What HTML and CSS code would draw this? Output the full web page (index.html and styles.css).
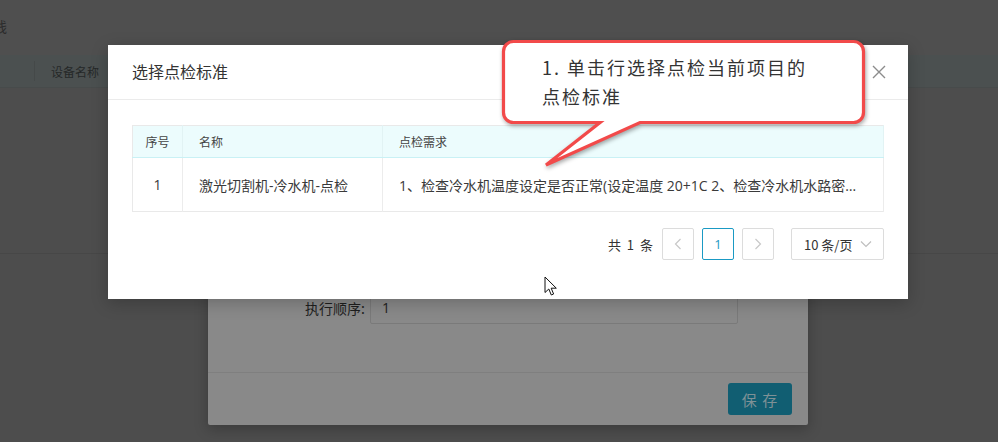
FILE: index.html
```html
<!DOCTYPE html>
<html lang="zh-CN">
<head>
<meta charset="utf-8">
<title>选择点检标准</title>
<link rel="stylesheet" href="styles.css">
</head>
<body>
<div class="page">
  <div class="page-top"><span class="page-title">线</span></div>
  <div class="page-bar">
    <div class="bar-cell bar-first"></div>
    <div class="bar-cell">设备名称</div>
  </div>
  <div class="page-rows"></div>
</div>

<div class="under-modal">
  <div class="under-body">
    <div class="form-row">
      <label class="form-label">执行顺序:</label>
      <div class="form-input">1</div>
    </div>
  </div>
  <div class="under-footer">
    <button class="btn-save">保 存</button>
  </div>
</div>

<div class="modal">
  <div class="modal-header">
    <span class="modal-title">选择点检标准</span>
    <svg class="modal-close" width="14" height="14" viewBox="0 0 14 14"><path d="M1 1L13 13M13 1L1 13" stroke="#8c8c8c" stroke-width="1.4" fill="none"/></svg>
  </div>
  <div class="modal-body">
    <table class="std-table">
      <thead>
        <tr><th class="col-no">序号</th><th class="col-name">名称</th><th class="col-req">点检需求</th></tr>
      </thead>
      <tbody>
        <tr><td class="col-no">1</td><td class="col-name">激光切割机-冷水机-点检</td><td class="col-req"><div class="ellipsis">1、检查冷水机温度设定是否正常(设定温度 20+1C 2、检查冷水机水路密封是否良好，有无漏水现象</div></td></tr>
      </tbody>
    </table>
    <div class="pager">
      <span class="pager-total">共 1 条</span>
      <span class="pager-btn pager-arrow"><svg width="8" height="12" viewBox="0 0 8 12"><path d="M6.5 1L1.5 6L6.5 11" stroke="#c8c8c8" stroke-width="1.2" fill="none"/></svg></span>
      <span class="pager-btn pager-active">1</span>
      <span class="pager-btn pager-arrow"><svg width="8" height="12" viewBox="0 0 8 12"><path d="M1.5 1L6.5 6L1.5 11" stroke="#c8c8c8" stroke-width="1.2" fill="none"/></svg></span>
      <span class="pager-size">10 条/页<svg width="12" height="8" viewBox="0 0 12 8"><path d="M1 1.5L6 6.5L11 1.5" stroke="#bfbfbf" stroke-width="1.2" fill="none"/></svg></span>
    </div>
  </div>
</div>

<div class="callout">
  <svg class="callout-shape" width="380" height="140" viewBox="496 34 380 140">
    <path d="M513.5 41.5H853.5A10 10 0 0 1 863.5 51.5V112.5A10 10 0 0 1 853.5 122.5H640L546 165L600 122.5H513.5A10 10 0 0 1 503.5 112.5V51.5A10 10 0 0 1 513.5 41.5Z" fill="#ffffff" stroke="#f24a4a" stroke-width="3.2" stroke-linejoin="miter"/>
  </svg>
  <div class="callout-text">1. 单击行选择点检当前项目的<br>点检标准</div>
</div>

<svg class="cursor" width="14" height="21" viewBox="0 0 14 21"><path d="M1 1V16.5L4.8 13L7.3 19L9.6 18L7.2 12.2H12.3Z" fill="#ffffff" stroke="#111" stroke-width="1" stroke-linejoin="round"/></svg>
</body>
</html>
```

FILE: styles.css
```css
* { box-sizing: border-box; }
html, body { margin: 0; padding: 0; }
body {
  width: 998px;
  height: 442px;
  overflow: hidden;
  background: #4d4d4d;
  font-family: "Open Sans", "Noto Sans CJK SC", sans-serif;
  color: #333;
}
.page { display: flex; flex-direction: column; }
.page-top {
  height: 55px;
  background: #4f4f4f;
  display: flex;
  align-items: center;
}
.page-title {
  font-family: "Noto Sans CJK SC", sans-serif;
  font-size: 14px;
  color: #2c2c2c;
  margin-left: -7px;
  margin-top: -4px;
}
.page-bar {
  height: 33px;
  background: #4b5050;
  border-bottom: 1px solid #474b4b;
  display: flex;
  align-items: center;
  font-family: "Noto Sans CJK SC", sans-serif;
  font-size: 12px;
  color: #252828;
}
.bar-cell { height: 100%; display: flex; align-items: center; }
.bar-first { width: 35px; border-right: 1px solid #454949; height: 20px; margin-right: 16px; }
.page-rows { height: 166px; border-bottom: 1px solid #474747; }

.under-modal {
  position: absolute;
  left: 208px;
  top: 60px;
  width: 600px;
  height: 365px;
  background: #898989;
  border-radius: 2px;
  display: flex;
  flex-direction: column;
  box-shadow: 0 4px 14px rgba(0,0,0,0.25);
}
.under-body {
  flex: 1;
  display: flex;
  flex-direction: column;
  justify-content: flex-end;
  padding-bottom: 48px;
  border-bottom: 1px solid #7f7f7f;
}
.form-row { display: flex; align-items: center; }
.form-label {
  width: 157px;
  text-align: right;
  font-family: "Noto Sans CJK SC", sans-serif;
  font-size: 14px;
  color: #1e1e1e;
}
.form-input {
  margin-left: 5px;
  width: 368px;
  height: 32px;
  border: 1px solid #7a7a7a;
  border-radius: 2px;
  padding: 0 11px;
  line-height: 30px;
  font-size: 14px;
  color: #1f1f1f;
}
.under-footer {
  height: 52px;
  display: flex;
  justify-content: flex-end;
  align-items: flex-start;
  padding: 10px 16px 0 0;
}
.btn-save {
  width: 64px;
  height: 32px;
  border: none;
  border-radius: 3px;
  background: #115e72;
  color: #7f9196;
  font-family: "Noto Sans CJK SC", sans-serif;
  font-size: 15px;
  letter-spacing: 1px;
  padding: 0;
}

.modal {
  position: absolute;
  left: 108px;
  top: 45px;
  width: 800px;
  height: 254px;
  background: #ffffff;
  box-shadow: 0 4px 16px rgba(0,0,0,0.22);
}
.modal-header {
  height: 55px;
  padding: 0 22px 0 24px;
  display: flex;
  align-items: center;
  justify-content: space-between;
  border-bottom: 1px solid #ebebeb;
}
.modal-title {
  font-family: "Noto Sans CJK SC", sans-serif;
  font-size: 16px;
  color: #333;
  margin-top: -2px;
}
.modal-close { margin-top: -1px; }
.modal-body { padding: 25px 24px 0 24px; }

.std-table {
  width: 752px;
  border-collapse: collapse;
  table-layout: fixed;
  border: 1px solid #e9e9e9;
}
.std-table th {
  height: 32px;
  background: #ecfcfd;
  border-bottom: 1px solid #c9f1f5;
  border-right: 1px solid #e2f3f4;
  font-family: "Noto Sans CJK SC", sans-serif;
  font-weight: normal;
  font-size: 12px;
  color: #444;
  text-align: left;
  padding: 0 16px;
}
.std-table td {
  height: 54px;
  border-right: 1px solid #ececec;
  font-size: 14px;
  color: #3a3a3a;
  padding: 0 16px;
  white-space: nowrap;
}
.std-table .col-no { width: 50px; text-align: center; padding: 0; }
.std-table .col-name { width: 200px; }
.ellipsis { overflow: hidden; text-overflow: ellipsis; white-space: nowrap; width: 458px; }

.pager {
  margin-top: 16px;
  display: flex;
  justify-content: flex-end;
  align-items: center;
  gap: 8px;
}
.pager-total {
  font-family: "Noto Sans CJK SC", sans-serif;
  font-size: 13px;
  word-spacing: 3px;
  color: #333;
  margin-right: 1px;
}
.pager-btn {
  width: 32px;
  height: 32px;
  border: 1px solid #dcdcdc;
  border-radius: 2px;
  display: flex;
  align-items: center;
  justify-content: center;
  font-size: 13px;
}
.pager-active { border-color: #1a9ac4; color: #1a9ac4; }
.pager-size {
  margin-left: 9px;
  width: 93px;
  height: 32px;
  border: 1px solid #dcdcdc;
  border-radius: 2px;
  display: flex;
  align-items: center;
  justify-content: space-between;
  padding: 0 11px 0 12px;
  font-family: "Noto Sans CJK SC", sans-serif;
  font-size: 13px;
  color: #333;
}

.callout {
  position: absolute;
  left: 496px;
  top: 34px;
  width: 380px;
  height: 140px;
}
.callout-shape {
  position: absolute;
  left: 0;
  top: 0;
  filter: drop-shadow(1px 2px 2px rgba(0,0,0,0.35));
}
.callout-text {
  position: relative;
  padding: 19px 0 0 46px;
  font-family: "Noto Sans CJK SC", serif;
  font-size: 18px;
  letter-spacing: 2px;
  line-height: 29px;
  color: #333;
  white-space: nowrap;
}
.cursor {
  position: absolute;
  left: 544px;
  top: 276px;
}
```
